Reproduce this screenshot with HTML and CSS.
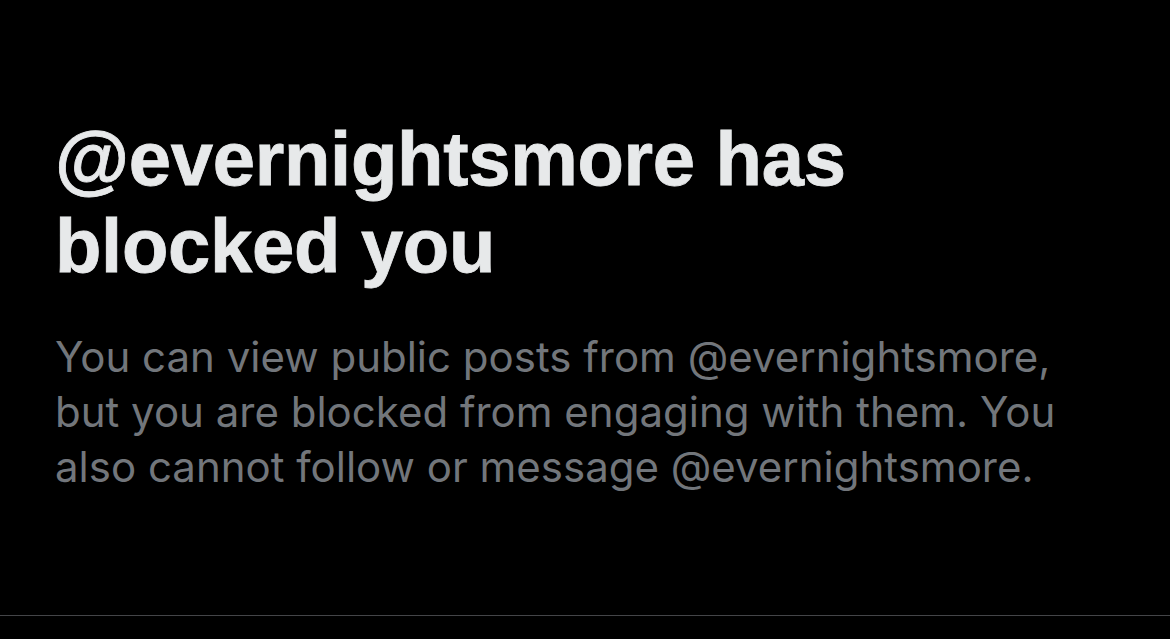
FILE: index.html
```html
<!DOCTYPE html>
<html lang="en">
<head>
    <meta charset="UTF-8">
    <meta name="viewport" content="width=device-width, initial-scale=1.0">
    <title>Blocked</title>
    <link rel="stylesheet" href="styles.css">
</head>
<body>
    <div class="blocked-panel">
        <h1 class="blocked-title">@evernightsmore has blocked you</h1>
        <p class="blocked-text">You can view public posts from @evernightsmore, but you are blocked from engaging with them. You also cannot follow or message @evernightsmore.</p>
    </div>
</body>
</html>
```

FILE: styles.css
```css
body {
    margin: 0;
    padding: 0;
    background-color: #000;
    height: 100vh;
    overflow: hidden;
}

/* Панель с сообщением о блокировке */
.blocked-panel {
    height: 616px;
    box-sizing: border-box;
    padding: 115px 0 0 55px;
    border-bottom: 1px solid #444548;
}

.blocked-title {
    margin: 0;
    max-width: 1030px;
    font-family: "Liberation Sans", Arial, sans-serif;
    font-weight: bold;
    font-size: 76px;
    line-height: 87px;
    letter-spacing: -0.3px;
    color: #e7e9ea;
    -webkit-text-stroke: 0.8px #e7e9ea; /* чуть жирнее, как в оригинале */
}

.blocked-text {
    margin: 40px 0 0;
    max-width: 1030px;
    font-family: Inter, "Liberation Sans", sans-serif;
    font-size: 42px;
    line-height: 55px;
    color: #72767b;
}
```
